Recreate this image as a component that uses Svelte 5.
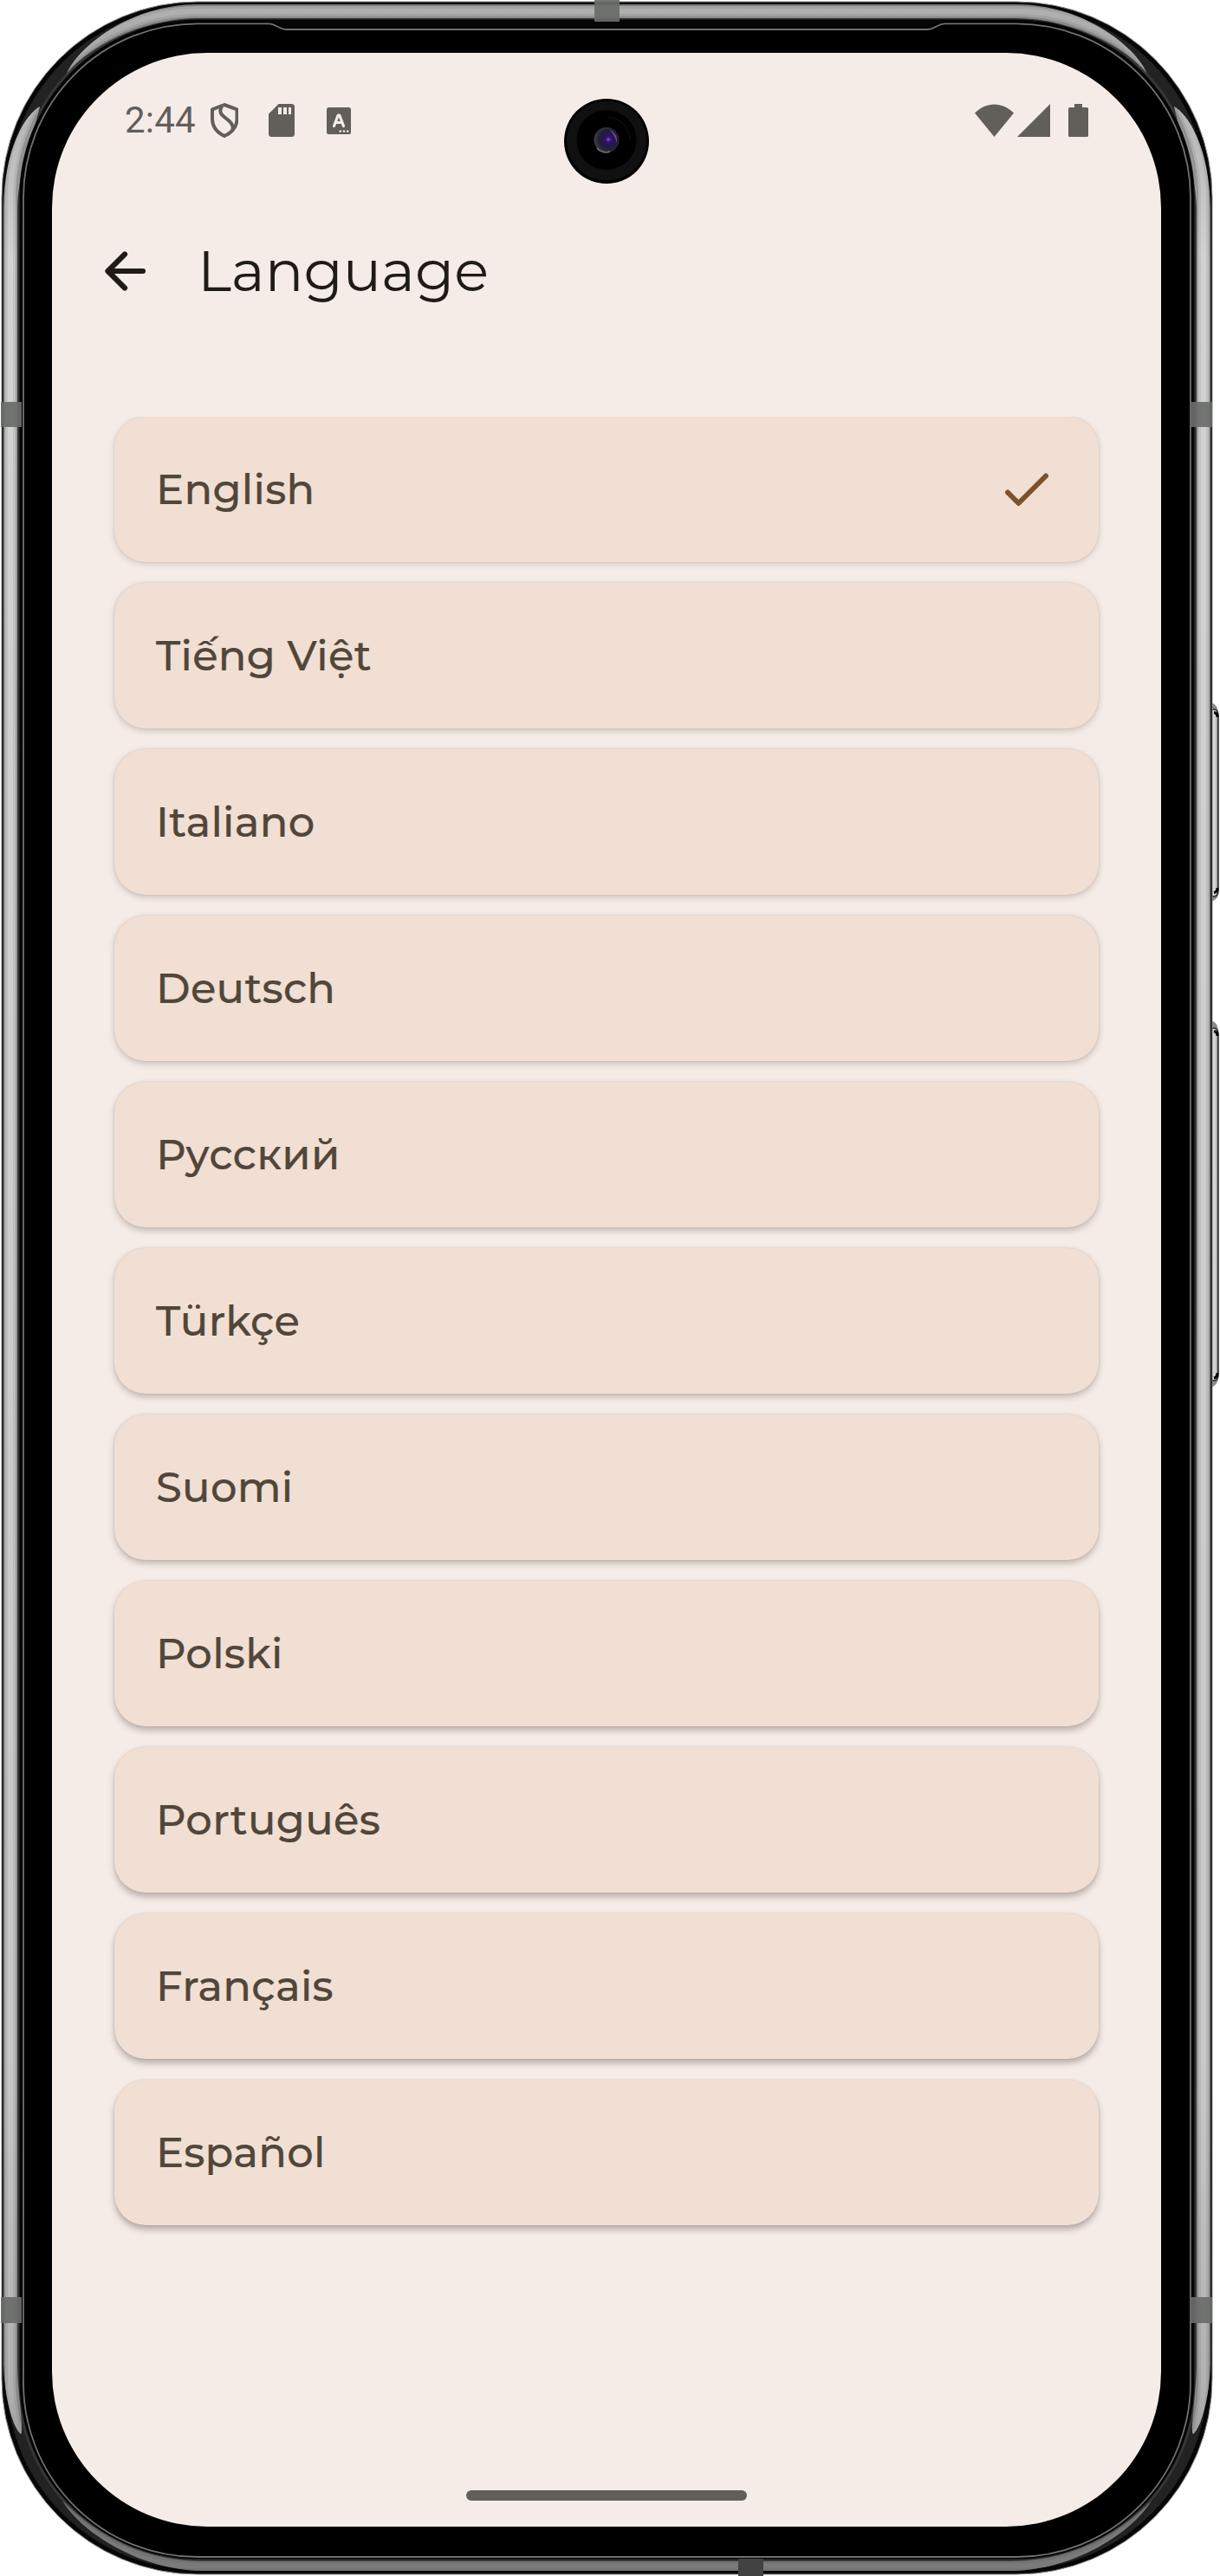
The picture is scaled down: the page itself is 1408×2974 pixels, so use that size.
<script>
  const languages = [
    'English',
    'Tiếng Việt',
    'Italiano',
    'Deutsch',
    'Русский',
    'Türkçe',
    'Suomi',
    'Polski',
    'Português',
    'Français',
    'Español'
  ];
  let selected = $state('English');

  const bodyPath =
    'M228 2H1173A226 226 0 0 1 1399 228V2746A226 226 0 0 1 1173 2972H228A226 226 0 0 1 2 2746V228A226 226 0 0 1 228 2Z';
  const glassPath =
    'M228 27.3H310C318 27.3 322 34 331 34H1070C1079 34 1082 27.3 1091 27.3H1173A201 201 0 0 1 1374 228V2750A201 201 0 0 1 1173 2952H228A201 201 0 0 1 27 2750V228A201 201 0 0 1 228 27.3Z';
  const topHalf =
    'M77 85C90 55 150 5 228 5H1173C1251 5 1311 55 1324 85C1290 45 1225 21 1173 21H228C176 21 111 45 77 85Z';
  const leftSide =
    'M46 123C30 132 5 170 4 240V2730C5 2765 14 2800 23 2809Q25 2811 25 2806C26 2795 20 2755 20 2730V240C21 195 42 145 46 123Z';
  const bottomHalf =
    'M72 2887C95 2925 165 2968 235 2968H1166C1236 2968 1306 2925 1329 2887C1286 2930 1231 2957 1166 2957H235C170 2957 115 2930 72 2887Z';
</script>

<div class="device">
  <svg class="frame" viewBox="0 0 1408 2974" aria-hidden="true">
    <defs>
      <linearGradient id="metal" gradientUnits="userSpaceOnUse" x1="0" y1="0" x2="0" y2="2974">
        <stop offset="0" stop-color="#b2b2b2" />
        <stop offset=".02" stop-color="#a8a8a8" />
        <stop offset=".1" stop-color="#d2d2d2" />
        <stop offset=".8" stop-color="#c8c8c8" />
        <stop offset=".93" stop-color="#b0b0b0" />
        <stop offset=".97" stop-color="#7e7e7e" />
        <stop offset="1" stop-color="#7a7a7a" />
      </linearGradient>
      <linearGradient id="key" x1="0" x2="1" y1="0" y2="0">
        <stop offset="0" stop-color="#555" />
        <stop offset=".4" stop-color="#dcdcdc" />
        <stop offset=".75" stop-color="#c8c8c8" />
        <stop offset="1" stop-color="#555" />
      </linearGradient>
      <radialGradient id="lens" cx=".58" cy=".48" r=".55">
        <stop offset="0" stop-color="#4a22b8" />
        <stop offset=".3" stop-color="#281458" />
        <stop offset=".7" stop-color="#1f2036" />
        <stop offset="1" stop-color="#3f3a44" />
      </radialGradient>
      <clipPath id="shine">
        <path d={topHalf} />
        <path d={leftSide} />
        <path d={leftSide} transform="translate(1401 0) scale(-1 1)" />
        <path d={bottomHalf} />
      </clipPath>
    </defs>

    <path d="M1398 811Q1406 814 1406 824V1032Q1406 1038 1398 1041ZM1398 1178Q1406 1181 1406 1191V1590Q1406 1598 1398 1602Z" fill="#8a8a8a" />
    <rect x="1396" y="819" width="10" height="216" rx="6" fill="url(#key)" stroke="#2a2a2a" stroke-width="1.5" />
    <rect x="1396" y="1187" width="10" height="407" rx="6" fill="url(#key)" stroke="#2a2a2a" stroke-width="1.5" />
    <path d="M1401 822.500Q1405 823 1405 828M1401 1030.500Q1405 1030 1405 1025M1401 1190.500Q1405 1191 1405 1196M1401 1591Q1405 1590 1405 1585" fill="none" stroke="#000" stroke-width="3" />

    <path d={bodyPath} fill="#060606" stroke="#888" stroke-width="1" />
    <rect x="14" y="14" width="1373" height="2946" rx="214" fill="none" stroke="#222" stroke-width="13" />
    <rect x="21" y="21" width="1359" height="2935" rx="207" fill="none" stroke="#363636" stroke-width="3" />
    <g clip-path="url(#shine)" fill="none" stroke="url(#metal)">
      <rect x="12" y="13" width="1377" height="2949.5" rx="215.5" stroke-width="20" opacity=".7" />
      <rect x="12" y="13" width="1377" height="2949.5" rx="215.5" stroke-width="12" opacity=".7" />
      <rect x="12" y="13" width="1377" height="2949.5" rx="215.5" stroke-width="6" />
    </g>

    <path d={glassPath} fill="#000" stroke="#000" stroke-width="5" />
    <path d={glassPath} fill="none" stroke="#717171" stroke-width="1.8" />

    <g fill="#6a6d6a" opacity=".93">
      <rect x="686" y="0" width="29" height="25" />
      <rect x="1" y="464" width="24" height="29" />
      <rect x="1375" y="464" width="24" height="29" />
      <rect x="1" y="2652" width="24" height="30" />
      <rect x="1375" y="2652" width="24" height="30" />
    </g>
    <rect x="852" y="2954" width="29" height="20" fill="#414241" />
  </svg>

  <main class="screen">
    <header class="status">
      <div class="time">2:44</div>
      <svg class="shield" width="32" height="40" viewBox="0 0 32 40" fill="none" stroke="currentColor" stroke-width="4" stroke-linejoin="round">
        <path d="M16 2L30.500 7.300V18C30.500 27 24.500 34 16 38C7.500 34 2 27 2 18V7.300Z" />
        <path d="M13 4C5 17 28 17 25.500 31" />
      </svg>
      <svg class="card-icon" width="30" height="38" viewBox="0 0 30 38">
        <path fill="currentColor" fill-rule="evenodd" d="M11.500 0H26.500Q30 0 30 3.500V34.500Q30 38 26.500 38H3.500Q0 38 0 34.500V11.500ZM11 4V12H15V4ZM17 4V12H21V4ZM23 4V12H26V4Z" />
      </svg>
      <svg class="letter-icon" width="28" height="31" viewBox="0 0 28 31">
        <rect width="28" height="31" rx="2.500" fill="currentColor" />
        <path class="cut" d="M8.500 21.500L13.200 9H14.800L19.500 21.500M10.500 17.500H17.500" />
        <g class="dots">
          <circle cx="15.800" cy="27.500" r="1.300" />
          <circle cx="20" cy="27.500" r="1.300" />
          <circle cx="24.200" cy="27.500" r="1.300" />
        </g>
      </svg>
      <div class="signals">
        <svg width="45" height="38" viewBox="0 0 45 38"><path fill="currentColor" d="M0 10.500C13-3 32-3 45 10.500L22.500 38Z" /></svg>
        <svg class="cell" width="38" height="38" viewBox="0 0 38 38"><path fill="currentColor" d="M38 0V38H0Z" /></svg>
        <svg class="battery" width="23" height="38" viewBox="0 0 23 38"><path fill="currentColor" d="M7 0H16V4H21.500Q23 4 23 5.500V36.500Q23 38 21.500 38H1.500Q0 38 0 36.500V5.500Q0 4 1.500 4H7Z" /></svg>
      </div>
    </header>

    <div class="appbar">
      <button class="back" aria-label="Back">
        <svg width="48" height="48" viewBox="0 0 48 48"><path d="M45 24H4.500M24 4.500L4.500 24L24 43.500" /></svg>
      </button>
      <h1>Language</h1>
    </div>

    <ul class="list">
      {#each languages as language, i}
        <li>
          <button class="row" style:--depth={i / 10} onclick={() => (selected = language)}>
            <span>{language}</span>
            {#if selected === language}
              <svg class="check" width="50" height="40" viewBox="0 0 50 40"><path d="M3 23.500L15.500 36L47 4.500" /></svg>
            {/if}
          </button>
        </li>
      {/each}
    </ul>

    <div class="home"></div>
  </main>

  <svg class="camera" width="98" height="98" viewBox="0 0 98 98" aria-hidden="true">
    <circle cx="49" cy="49" r="49" fill="#000" />
    <circle cx="49" cy="48.500" r="46" fill="#101010" />
    <circle cx="49" cy="47.500" r="34.500" fill="#000" />
    <path d="M50 21A27 27 0 0 1 76 47" fill="none" stroke="#0d0d0f" stroke-width="1.500" />
    <circle cx="49" cy="47.500" r="14.500" fill="url(#lens)" />
    <path d="M38 57A14 14 0 0 0 53 61" fill="none" stroke="#77727c" stroke-width="1.500" />
    <path d="M53 36Q62 40 61 51Q59 43 53 36Z" fill="#754a90" />
    <circle cx="51" cy="47" r="1.500" fill="#7a50e8" />
  </svg>
</div>

<style>
  :global(body) {
    margin: 0;
    background: #fff;
  }
  .device {
    position: relative;
    box-sizing: border-box;
    width: 1408px;
    height: 2974px;
    padding: 61px 68px 57px 60px;
    overflow: hidden;
  }
  .frame {
    position: absolute;
    inset: 0;
    width: 1408px;
    height: 2974px;
  }
  .screen {
    position: relative;
    display: flex;
    flex-direction: column;
    height: 2856px;
    border-radius: 179px;
    background: #f5ece7;
    overflow: hidden;
    font-family: Montserrat, Inter, 'Noto Sans', sans-serif;
  }
  .camera {
    position: absolute;
    left: 651px;
    top: 114px;
  }
  svg {
    display: block;
    flex: none;
  }
  .status {
    display: flex;
    align-items: center;
    height: 156px;
    padding: 0 84px;
    color: #625e5a;
  }
  .time {
    width: 99px;
    font: 400 42px/50px Roboto, sans-serif;
    letter-spacing: 0.2px;
  }
  .card-icon {
    margin-left: 35px;
  }
  .letter-icon {
    margin-left: 37px;
  }
  .cut {
    fill: none;
    stroke: #f5ece7;
    stroke-width: 3.2;
    stroke-linecap: round;
    stroke-linejoin: round;
  }
  .dots {
    fill: #f5ece7;
  }
  .signals {
    display: flex;
    margin-left: auto;
  }
  .cell {
    margin-left: 4px;
  }
  .battery {
    margin-left: 21px;
  }
  .appbar {
    display: flex;
    align-items: center;
    height: 192px;
    padding-left: 60px;
    color: #1f1b16;
  }
  button {
    border: 0;
    padding: 0;
    background: none;
    color: inherit;
    font: inherit;
    cursor: pointer;
  }
  .back path {
    fill: none;
    stroke: currentColor;
    stroke-width: 6.2;
    stroke-linecap: round;
    stroke-linejoin: round;
  }
  h1 {
    margin: 0 0 0 60px;
    font-size: 66px;
    font-weight: 400;
    line-height: 84px;
  }
  .list {
    display: flex;
    flex-direction: column;
    gap: 24px;
    margin: 72px 72px 0;
    padding: 0;
    list-style: none;
    clip-path: inset(0 -24px -24px);
  }
  .row {
    display: flex;
    align-items: center;
    justify-content: space-between;
    width: 100%;
    height: 168px;
    padding: 0 58px 0 48px;
    border-radius: 36px;
    background: #f1dfd3;
    color: #51463a;
    font-size: 48px;
    font-weight: 500;
    line-height: 72px;
    letter-spacing: 0.3px;
    -webkit-text-stroke: 0.2px currentColor;
    box-shadow:
      0 calc(2px + 3px * var(--depth)) 7px rgb(70 50 45 / calc(0.19 + 0.16 * var(--depth))),
      0 0 2px rgb(90 80 80 / 0.18);
  }
  .check {
    color: #7b532b;
  }
  .check path {
    fill: none;
    stroke: currentColor;
    stroke-width: 6;
    stroke-linecap: round;
    stroke-linejoin: round;
  }
  .home {
    width: 324px;
    height: 12px;
    margin: auto auto 30px 478px;
    border-radius: 6px;
    background: #625e5a;
  }
</style>
